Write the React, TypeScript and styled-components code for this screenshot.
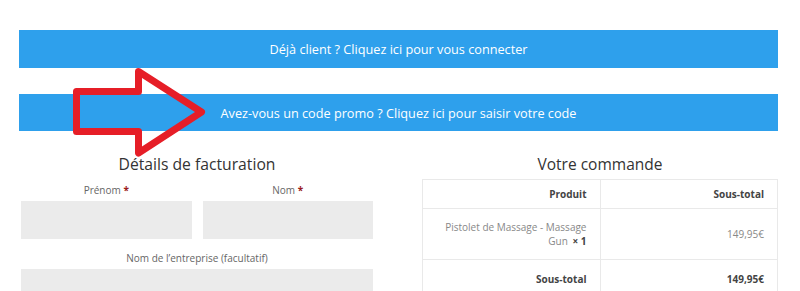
import React from "react";
import styled, { createGlobalStyle } from "styled-components";

const Global = createGlobalStyle`
  html, body { margin: 0; padding: 0; background: #fff; }
  body { font-family: "Open Sans", "Liberation Sans", sans-serif; color: #666; }
  * { box-sizing: border-box; }
`;

const Page = styled.div`
  position: relative;
  width: 800px;
  height: 291px;
  overflow: hidden;
  padding: 30px 22px 0 19px;
`;

const Notice = styled.div<{ $h: number; $mb: number }>`
  height: ${(p) => p.$h}px;
  margin-bottom: ${(p) => p.$mb}px;
  background: #2ea0ec;
  color: #fff;
  font-size: 12.7px;
  display: flex;
  align-items: center;
  justify-content: center;
`;

const Columns = styled.div`
  display: grid;
  grid-template-columns: 355px 356px;
  column-gap: 48px;
  margin-top: 18px;
`;

const Heading = styled.h3<{ $size: number }>`
  margin: 0;
  height: 30px;
  line-height: 30px;
  font-size: ${(p) => p.$size}px;
  font-weight: 400;
  color: #333;
  text-align: center;
`;

const Billing = styled.div`
  padding: 0 1px 0 2px;
`;

const FieldRow = styled.div`
  display: grid;
  grid-template-columns: 1fr 1fr;
  column-gap: 11px;
`;

const Field = styled.div<{ $mt: number }>`
  margin-top: ${(p) => p.$mt}px;
`;

const Label = styled.label`
  display: block;
  height: 20px;
  line-height: 20px;
  font-size: 10px;
  color: #666;
  text-align: center;
  margin-bottom: 1px;
`;

const Req = styled.span`
  color: #9b1c1c;
  font-weight: 700;
`;

const Input = styled.div`
  height: 38px;
  background: #ebebeb;
`;

const Table = styled.table`
  width: 100%;
  border-collapse: collapse;
  border: 1px solid #e9e9e9;
  font-size: 10px;
`;

const Cell = styled.td<{ $bold?: boolean; $h: number }>`
  height: ${(p) => p.$h}px;
  padding: 0 13px 0 14px;
  text-align: right;
  vertical-align: middle;
  border: 1px solid #e9e9e9;
  color: ${(p) => (p.$bold ? "#444" : "#888")};
  font-weight: ${(p) => (p.$bold ? 700 : 400)};
  line-height: 14px;
  width: 50%;
`;

const Qty = styled.strong`
  color: #444;
  margin-left: 2px;
`;

const ArrowSvg = styled.svg`
  position: absolute;
  left: 0;
  top: 0;
  pointer-events: none;
`;

export default function App() {
  return (
    <>
      <Global />
      <Page>
        <Notice $h={38} $mb={26}>Déjà client ? Cliquez ici pour vous connecter</Notice>
        <Notice $h={37} $mb={0}>Avez-vous un code promo ? Cliquez ici pour saisir votre code</Notice>
        <Columns>
          <Billing>
            <Heading $size={15.7}>Détails de facturation</Heading>
            <FieldRow>
              <Field $mt={1}>
                <Label>
                  Prénom <Req>*</Req>
                </Label>
                <Input />
              </Field>
              <Field $mt={1}>
                <Label>
                  Nom <Req>*</Req>
                </Label>
                <Input />
              </Field>
            </FieldRow>
            <Field $mt={9}>
              <Label>Nom de l’entreprise (facultatif)</Label>
              <Input />
            </Field>
          </Billing>
          <div>
            <Heading $size={15.5}>Votre commande</Heading>
            <Table>
              <tbody>
                <tr>
                  <Cell as="th" $bold $h={29}>Produit</Cell>
                  <Cell as="th" $bold $h={29}>Sous-total</Cell>
                </tr>
                <tr>
                  <Cell $h={51}>
                    Pistolet de Massage - Massage Gun <Qty>× 1</Qty>
                  </Cell>
                  <Cell $h={51}>149,95€</Cell>
                </tr>
                <tr>
                  <Cell as="th" $bold $h={38}>Sous-total</Cell>
                  <Cell as="th" $bold $h={38}>149,95€</Cell>
                </tr>
              </tbody>
            </Table>
          </div>
        </Columns>
        <ArrowSvg width="800" height="291" viewBox="0 0 800 291">
          <path
            d="M76.5 91.5 H138.5 V71.5 L201.5 112 L138.5 153 V131.5 H76.5 Z"
            fill="none"
            stroke="#e61e27"
            strokeWidth="7"
            strokeLinejoin="round"
          />
        </ArrowSvg>
      </Page>
    </>
  );
}
